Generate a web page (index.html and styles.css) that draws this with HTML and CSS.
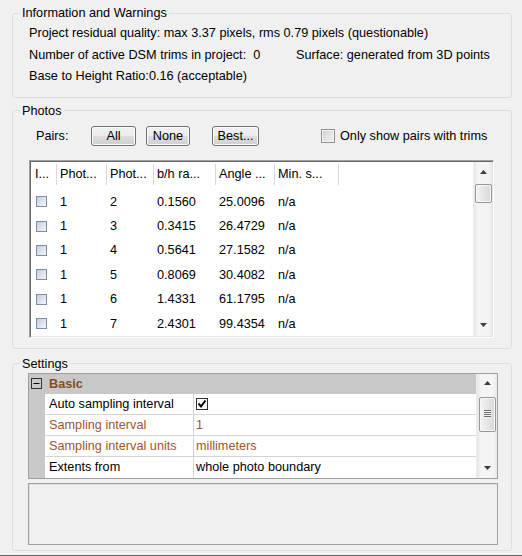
FILE: index.html
```html
<!DOCTYPE html>
<html>
<head>
<meta charset="utf-8">
<link rel="stylesheet" href="styles.css">
</head>
<body>
<div class="window">
  <fieldset class="group info">
    <legend>Information and Warnings</legend>
    <div class="info-row">Project residual quality: max 3.37 pixels, rms 0.79 pixels (questionable)</div>
    <div class="info-row split"><span>Number of active DSM trims in project:&nbsp; 0</span><span>Surface: generated from 3D points</span></div>
    <div class="info-row">Base to Height Ratio:0.16 (acceptable)</div>
  </fieldset>

  <fieldset class="group photos">
    <legend>Photos</legend>
    <div class="pairs-bar">
      <span class="pairs-label">Pairs:</span>
      <span class="btn btn-all">All</span>
      <span class="btn btn-none">None</span>
      <span class="btn btn-best">Best...</span>
      <span class="trim-check"><span class="cbox"></span><span>Only show pairs with trims</span></span>
    </div>
    <div class="list">
      <div class="list-body">
        <div class="list-header lrow">
          <span class="c c1">I...</span><span class="c">Phot...</span><span class="c">Phot...</span><span class="c">b/h ra...</span><span class="c">Angle ...</span><span class="c">Min. s...</span>
        </div>
        <div class="list-rows">
          <div class="lrow item"><span class="c c1"><span class="rbox"></span></span><span class="c">1</span><span class="c">2</span><span class="c">0.1560</span><span class="c">25.0096</span><span class="c">n/a</span></div>
          <div class="lrow item"><span class="c c1"><span class="rbox"></span></span><span class="c">1</span><span class="c">3</span><span class="c">0.3415</span><span class="c">26.4729</span><span class="c">n/a</span></div>
          <div class="lrow item"><span class="c c1"><span class="rbox"></span></span><span class="c">1</span><span class="c">4</span><span class="c">0.5641</span><span class="c">27.1582</span><span class="c">n/a</span></div>
          <div class="lrow item"><span class="c c1"><span class="rbox"></span></span><span class="c">1</span><span class="c">5</span><span class="c">0.8069</span><span class="c">30.4082</span><span class="c">n/a</span></div>
          <div class="lrow item"><span class="c c1"><span class="rbox"></span></span><span class="c">1</span><span class="c">6</span><span class="c">1.4331</span><span class="c">61.1795</span><span class="c">n/a</span></div>
          <div class="lrow item"><span class="c c1"><span class="rbox"></span></span><span class="c">1</span><span class="c">7</span><span class="c">2.4301</span><span class="c">99.4354</span><span class="c">n/a</span></div>
        </div>
      </div>
      <div class="vscroll list-scroll">
        <div class="sb-arrow"><svg width="7" height="4" viewBox="0 0 7 4"><path d="M0 4 L3.5 0 L7 4Z"/></svg></div>
        <div class="sb-track"><div class="sb-thumb"></div></div>
        <div class="sb-arrow"><svg width="7" height="4" viewBox="0 0 7 4"><path d="M0 0 L3.5 4 L7 0Z"/></svg></div>
      </div>
    </div>
  </fieldset>

  <fieldset class="group settings">
    <legend>Settings</legend>
    <div class="propgrid">
      <div class="pg-body">
        <div class="pg-cat">
          <span class="pg-gutter"><svg width="11" height="11" viewBox="0 0 11 11"><rect x="0.5" y="0.5" width="10" height="10" fill="none" stroke="#333"/><path d="M2.5 5.5 H8.5" stroke="#000" stroke-width="1"/></svg></span>
          <span class="pg-cat-name">Basic</span>
        </div>
        <div class="pg-row">
          <span class="pg-gutter"></span>
          <span class="pg-name">Auto sampling interval</span>
          <span class="pg-value"><svg class="pg-check" width="12" height="12" viewBox="0 0 12 12"><rect x="0.5" y="0.5" width="11" height="11" fill="#fff" stroke="#333"/><path d="M2.5 5.5 L5 8.5 L9.5 2.5" fill="none" stroke="#000" stroke-width="2"/></svg></span>
        </div>
        <div class="pg-row brown">
          <span class="pg-gutter"></span>
          <span class="pg-name">Sampling interval</span>
          <span class="pg-value">1</span>
        </div>
        <div class="pg-row brown">
          <span class="pg-gutter"></span>
          <span class="pg-name">Sampling interval units</span>
          <span class="pg-value">millimeters</span>
        </div>
        <div class="pg-row">
          <span class="pg-gutter"></span>
          <span class="pg-name">Extents from</span>
          <span class="pg-value">whole photo boundary</span>
        </div>
      </div>
      <div class="vscroll pg-scroll">
        <div class="sb-arrow"><svg width="7" height="4" viewBox="0 0 7 4"><path d="M0 4 L3.5 0 L7 4Z"/></svg></div>
        <div class="sb-track"><div class="sb-thumb"><span class="grip"></span></div></div>
        <div class="sb-arrow"><svg width="7" height="4" viewBox="0 0 7 4"><path d="M0 0 L3.5 4 L7 0Z"/></svg></div>
      </div>
    </div>
    <div class="desc"></div>
  </fieldset>
</div>
</body>
</html>
```

FILE: styles.css
```css
* { box-sizing: border-box; }
html, body { margin: 0; padding: 0; background: #f0f0f0; }
body {
  font-family: "Liberation Sans", Arial, sans-serif;
  font-size: 12.7px;
  color: #000;
}
.window {
  width: 522px;
  height: 556px;
  padding: 5px 10px 0 12px;
  border-bottom: 1px solid #646464;
  overflow: hidden;
}

/* group boxes */
.group {
  margin: 0;
  width: 500px;
  min-width: 0;
  border: 1px solid #d5dfe5;
  border-radius: 3px;
  padding: 2px 8px 9px 16px;
}
.group legend {
  padding: 0 2px;
  margin-left: -9px;
  line-height: 16px;
}
.photos { margin-top: 5px; padding: 7px 8px 10px 16px; }
.settings { margin-top: 7px; padding: 1px 8px 5px 15px; }
.settings legend { margin-left: -8px; }

/* info */
.info-row { line-height: 21.5px; white-space: nowrap; }
.info-row.split { display: grid; grid-template-columns: 267px auto; }

/* pairs toolbar */
.pairs-bar {
  display: flex;
  align-items: center;
  height: 20px;
  white-space: nowrap;
}
.pairs-label { width: 62px; padding-left: 7px; }
.btn {
  display: flex;
  align-items: center;
  justify-content: center;
  height: 20px;
  border: 1px solid #707070;
  border-radius: 3px;
  background: linear-gradient(#f2f2f2 0%, #ebebeb 50%, #dddddd 51%, #cfcfcf 100%);
  box-shadow: inset 0 0 0 1px #fbfbfb;
}
.btn-all { width: 45px; }
.btn-none { width: 44px; margin-left: 10px; }
.btn-best { width: 47px; margin-left: 22px; }
.trim-check { display: flex; align-items: center; margin-left: 62px; }
.cbox {
  width: 14px;
  height: 14px;
  margin-right: 5px;
  border: 1px solid #8e8f8f;
  background: linear-gradient(135deg, #cfcfcf, #f4f4f4);
  box-shadow: inset 0 0 0 1px #f4f4f4;
}

/* list view */
.list {
  margin-top: 14px;
  width: 465px;
  height: 178px;
  display: grid;
  grid-template-columns: 1fr 19px;
  background: #fff;
  padding: 1px;
  border: 1px solid;
  border-color: #a0a0a0 #ffffff #ffffff #a0a0a0;
  box-shadow: inset 1px 1px 0 #696969, inset -1px -1px 0 #e3e3e3;
  overflow: hidden;
}
.list-body { overflow: hidden; }
.lrow {
  display: grid;
  grid-template-columns: 26px 50px 47px 62px 59px 64px;
  white-space: nowrap;
}
.list-header { height: 23px; align-items: center; margin-top: 1px; }
.list-header .c { border-right: 1px solid #d9d9d9; height: 21px; line-height: 21px; }
.c { padding-left: 3px; overflow: hidden; }
.c1 { padding-left: 4px; }
.list-rows { padding-top: 4px; }
.item { height: 24.4px; align-items: center; }
.item .c1 { padding-left: 5px; display: flex; align-items: center; }
.rbox {
  display: block;
  width: 11px;
  height: 11px;
  border: 1px solid #7b8ea8;
  background: linear-gradient(135deg, #c3cdda, #f6f8fa);
}

/* scrollbars */
.vscroll {
  display: flex;
  flex-direction: column;
  background: linear-gradient(to right, #e6e6e6, #f4f4f4 20%, #f4f4f4 80%, #e9e9e9);
  border-left: 1px solid #ececec;
}
.sb-arrow {
  height: 21px;
  display: flex;
  align-items: center;
  justify-content: center;
  fill: #3c3c3c;
}
.sb-track { flex: 1; padding: 1px 0 0 1px; }
.sb-thumb {
  width: 17px;
  height: 19px;
  border: 1px solid #979797;
  border-radius: 2px;
  background: linear-gradient(to right, #f3f3f3, #e6e6e6 50%, #d9d9d9);
  box-shadow: inset 0 0 0 1px #f8f8f8;
  display: flex;
  align-items: center;
  justify-content: center;
}
.pg-scroll .sb-arrow { height: 19px; }
.pg-scroll .sb-track { padding: 4px 0 0 2px; }
.pg-scroll .sb-thumb { height: 35px; }
.grip {
  display: block;
  width: 7px;
  height: 8px;
  background: repeating-linear-gradient(#6c6c6c 0 1px, #f4f4f4 1px 2px);
}

/* property grid */
.propgrid {
  width: 470px;
  height: 106px;
  display: grid;
  grid-template-columns: 1fr 21px;
  border: 1px solid #a0a0a0;
  background: #fff;
}
.pg-body { display: flex; flex-direction: column; }
.pg-cat {
  height: 20px;
  background: #c8c8c8;
  display: flex;
  align-items: center;
}
.pg-cat .pg-gutter { width: 16px; display: flex; align-items: center; padding-left: 2px; }
.pg-cat-name { padding-left: 4px; font-weight: bold; color: #8b4a17; }
.pg-row {
  height: 21px;
  display: grid;
  grid-template-columns: 16px 149px 1fr;
  white-space: nowrap;
}
.pg-row .pg-gutter { background: #c8c8c8; }
.pg-name, .pg-value {
  border-bottom: 1px solid #d4d4d4;
  line-height: 20px;
  overflow: hidden;
}
.pg-row:last-child .pg-name, .pg-row:last-child .pg-value { border-bottom: none; line-height: 21px; }
.pg-name { padding-left: 4px; border-right: 1px solid #d4d4d4; }
.pg-value { padding-left: 2px; display: flex; align-items: center; }
.brown { color: #a0562c; }
.pg-check { display: block; }

/* description */
.desc {
  margin-top: 4px;
  width: 470px;
  height: 62px;
  border: 1px solid #a0a0a0;
  box-shadow: inset 1px 1px 0 #e3e3e3;
  background: #f0f0f0;
}
```
